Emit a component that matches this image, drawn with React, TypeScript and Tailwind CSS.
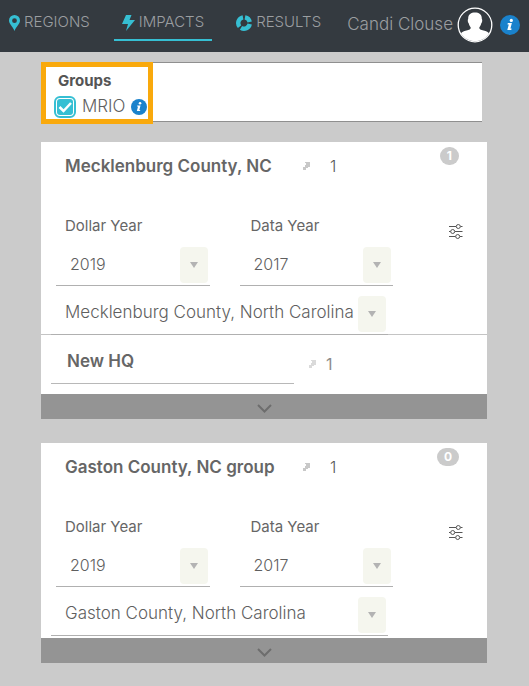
import type { ReactNode } from "react";

const teal = "#36bfd3";

function PinIcon() {
  return (
    <svg width="11" height="16" viewBox="0 0 11 16" fill={teal} aria-hidden="true">
      <path
        fillRule="evenodd"
        d="M5.5 0A5.5 5.5 0 0 0 0 5.5C0 9 3.6 11.200 5.500 16 7.400 11.200 11 9 11 5.500A5.500 5.500 0 0 0 5.500 0Zm0 3.300a2.400 2.400 0 1 1 0 4.800 2.400 2.400 0 0 1 0-4.800Z"
      />
    </svg>
  );
}

function BoltIcon() {
  return (
    <svg width="13" height="16" viewBox="0 0 13 16" fill={teal} aria-hidden="true">
      <path d="M4 0H9.500L7.500 5H13L4 16L6 9H0Z" />
    </svg>
  );
}

function DonutIcon() {
  return (
    <svg width="16" height="16" viewBox="0 0 16 16" aria-hidden="true">
      <g fill="none" stroke={teal} strokeWidth="4.400">
        <path d="M9 2.300A5.800 5.800 0 0 1 13.700 7" />
        <path d="M13.700 9A5.800 5.800 0 0 1 5 12.900" />
        <path d="M3.600 11.700A5.800 5.800 0 0 1 7 2.300" />
      </g>
    </svg>
  );
}

function InfoIcon({ className }: { className: string }) {
  return (
    <svg className={className} viewBox="0 0 20 20" aria-hidden="true">
      <circle cx="10" cy="10" r="10" fill="#1a82cc" />
      <g fill="#fff">
        <circle cx="11.300" cy="5.400" r="1.600" />
        <path d="M7.800 8H11.900L10.400 13.600H11.600L11.300 15H7.300L8.800 9.400H7.500Z" />
      </g>
    </svg>
  );
}

function Avatar() {
  return (
    <svg width="36" height="36" viewBox="0 0 36 36" aria-hidden="true">
      <circle cx="18" cy="18" r="16.800" fill="none" stroke="#fff" strokeWidth="1.300" />
      <path
        fill="#fff"
        d="M18 5.500C22 5.500 25 7.500 24.800 12C25.500 12.200 25.300 15.500 24.400 16C24 18.500 22.800 19.500 22.300 20.500C22.100 22.500 23.500 23 26.500 23.600C29.500 24.300 31.300 25.200 32 26.500A16.500 16.500 0 0 1 4 26.500C4.700 25.200 6.500 24.300 9.500 23.600C12.500 23 13.900 22.500 13.700 20.500C13.200 19.500 12 18.500 11.600 16C10.700 15.500 10.500 12.200 11.200 12C11 7.500 14 5.500 18 5.500Z"
      />
    </svg>
  );
}

function LinkMark({ className }: { className: string }) {
  return (
    <svg width="8" height="8" viewBox="0 0 8 8" shapeRendering="crispEdges" className={className} aria-hidden="true">
      <path fill="currentColor" d="M3 0H8V5H6V6H4V8H1V5H3V3H4V1H3Z" />
    </svg>
  );
}

function SlidersIcon() {
  return (
    <svg width="14" height="16" viewBox="0 0 14 16" fill="none" stroke="#555" aria-hidden="true">
      <path d="M0 2.500H7M11.500 2.500H13.500M0 7.500H1.500M6 7.500H13.500M0 12.500H6.500M11 12.500H13.500" />
      <circle cx="9.300" cy="2.500" r="2" />
      <circle cx="3.700" cy="7.500" r="2" />
      <circle cx="8.700" cy="12.500" r="2" />
    </svg>
  );
}

function NavLink({ icon, label, active = false }: { icon: ReactNode; label: string; active?: boolean }) {
  return (
    <a
      href="#"
      className={
        "flex h-[41px] items-center gap-1 border-b-2 px-2 pt-[6px] " +
        (active ? "border-[#36bfd3]" : "border-transparent")
      }
    >
      {icon}
      {label}
    </a>
  );
}

function Picker({ id, value, label, className }: { id: string; value: string; label?: string; className: string }) {
  return (
    <div className="relative">
      <select
        id={id}
        aria-label={label}
        className={
          "block h-[39px] w-full appearance-none rounded-none border-b border-[#b0b0b0] bg-transparent pb-1 font-light text-[#5f5f5f] outline-none " +
          className
        }
      >
        <option>{value}</option>
      </select>
      <span className="pointer-events-none absolute top-0 right-[2px] flex h-9 w-7 items-center justify-center rounded-sm bg-[#f5f6ee]">
        <svg width="8" height="6" viewBox="0 0 8 6" fill="#b3b3b3" aria-hidden="true">
          <path d="M0 0H8L4 6Z" />
        </svg>
      </span>
    </div>
  );
}

function GroupCard({
  id,
  title,
  count,
  region,
  event,
}: {
  id: string;
  title: string;
  count: number;
  region: string;
  event?: string;
}) {
  return (
    <section className="bg-white">
      <div className="flex h-[74px] items-start pl-6">
        <h2 className="flex-1 pt-3 text-[17px] leading-6 font-semibold text-[#666]">{title}</h2>
        <div className="flex w-[185px] items-start justify-between pr-7">
          <div className="flex items-center gap-5 pt-3">
            <LinkMark className="text-[#c8c8c8]" />
            <span className="text-base leading-6 font-light text-[#555]">1</span>
          </div>
          <span className="mt-[5px] rounded-full bg-[#cbcbcb] px-[7px] text-xs leading-[18px] font-bold text-white">
            {count}
          </span>
        </div>
      </div>

      <div className="flex pl-[15px]">
        <div className="grid flex-1 grid-cols-2 gap-x-[30px]">
          <div>
            <label htmlFor={id + "-dollar"} className="mb-[11px] block pl-[9px] text-[15px] leading-5 text-[#666]">
              Dollar Year
            </label>
            <Picker id={id + "-dollar"} value="2019" className="pl-[14px] text-base" />
          </div>
          <div>
            <label htmlFor={id + "-data"} className="mb-[11px] block pl-[11px] text-[15px] leading-5 text-[#666]">
              Data Year
            </label>
            <Picker id={id + "-data"} value="2017" className="pl-[14px] text-base" />
          </div>
        </div>
        <div className="w-[94px] pt-2 pl-14">
          <button type="button" aria-label="Group settings" className="block">
            <SlidersIcon />
          </button>
        </div>
      </div>

      <div className="mt-[10px] mr-[99px] ml-[10px]">
        <Picker id={id + "-region"} label="Region" value={region} className="pl-[14px] text-[17px]" />
      </div>

      {event ? (
        <div className="-mt-px flex items-center border-t border-[#c4c4c4] pb-[10px] pl-[10px]">
          <input
            aria-label="Event name"
            defaultValue={event}
            className="h-[49px] min-w-0 flex-1 border-b border-[#b8b8b8] pt-1 pl-4 text-[17px] font-semibold text-[#666] outline-none"
          />
          <div className="flex w-[193px] items-center gap-[10px] pt-2 pl-[14px]">
            <LinkMark className="text-[#dadada]" />
            <span className="text-base text-[#8c8c8c]">1</span>
          </div>
        </div>
      ) : (
        <div className="h-[2px]" />
      )}

      <button
        type="button"
        aria-label="Expand group"
        className="flex h-[25px] w-full items-center justify-center bg-[#949494] pt-1"
      >
        <svg width="15" height="9" viewBox="0 0 15 9" fill="none" stroke="#6d6d6d" strokeWidth="2" aria-hidden="true">
          <path d="M1 1L7.500 7.500L14 1" />
        </svg>
      </button>
    </section>
  );
}

export default function App() {
  return (
    <div className="min-h-screen bg-[#cbcbcb] font-[Inter,'Open_Sans',sans-serif]">
      <header className="flex h-[52px] items-start justify-between bg-[#343a40] pr-[9px] pl-px text-[#9b9ea1]">
        <nav className="flex gap-4 text-[15px] font-light">
          <NavLink icon={<PinIcon />} label="REGIONS" />
          <NavLink icon={<BoltIcon />} label="IMPACTS" active />
          <NavLink icon={<DonutIcon />} label="RESULTS" />
        </nav>
        <div className="flex h-[50px] items-center">
          <span className="text-[17px] font-light whitespace-nowrap">Candi Clouse</span>
          <button type="button" aria-label="Account" className="ml-1">
            <Avatar />
          </button>
          <button type="button" aria-label="Help" className="ml-[7px]">
            <InfoIcon className="size-5" />
          </button>
        </div>
      </header>

      <main className="pt-[10px] pr-[42px] pb-[23px] pl-[41px]">
        <section className="relative mr-[5px] h-[60px] border-y border-[#8f8f8f] bg-white pt-2 pl-[13px]">
          <div className="pointer-events-none absolute -top-px left-0 h-[62px] w-28 border-5 border-[#f9a90c]" />
          <h2 className="pl-1 text-[15px] leading-5 font-bold text-[#555]">Groups</h2>
          <div className="mt-[5px] flex h-[22px] items-center">
            <label className="flex items-center gap-[6px] text-[17px] font-light text-[#5f5f5f]">
              <span className="relative block size-[22px]">
                <input
                  type="checkbox"
                  defaultChecked
                  className="peer block size-full appearance-none rounded-md border-2 border-[#36bfd3] bg-white p-px checked:bg-[#36bfd3] checked:bg-clip-content"
                />
                <svg
                  className="pointer-events-none absolute inset-0 hidden peer-checked:block"
                  viewBox="0 0 22 22"
                  fill="none"
                  stroke="#fff"
                  strokeWidth="2.500"
                  aria-hidden="true"
                >
                  <path d="M5.500 11L9.500 15L17 7" />
                </svg>
              </span>
              MRIO
            </label>
            <button type="button" aria-label="About MRIO" className="ml-[6px]">
              <InfoIcon className="size-4" />
            </button>
          </div>
        </section>

        <div className="mt-5 flex flex-col gap-6">
          <GroupCard
            id="mecklenburg"
            title="Mecklenburg County, NC"
            count={1}
            region="Mecklenburg County, North Carolina"
            event="New HQ"
          />
          <GroupCard id="gaston" title="Gaston County, NC group" count={0} region="Gaston County, North Carolina" />
        </div>
      </main>
    </div>
  );
}
